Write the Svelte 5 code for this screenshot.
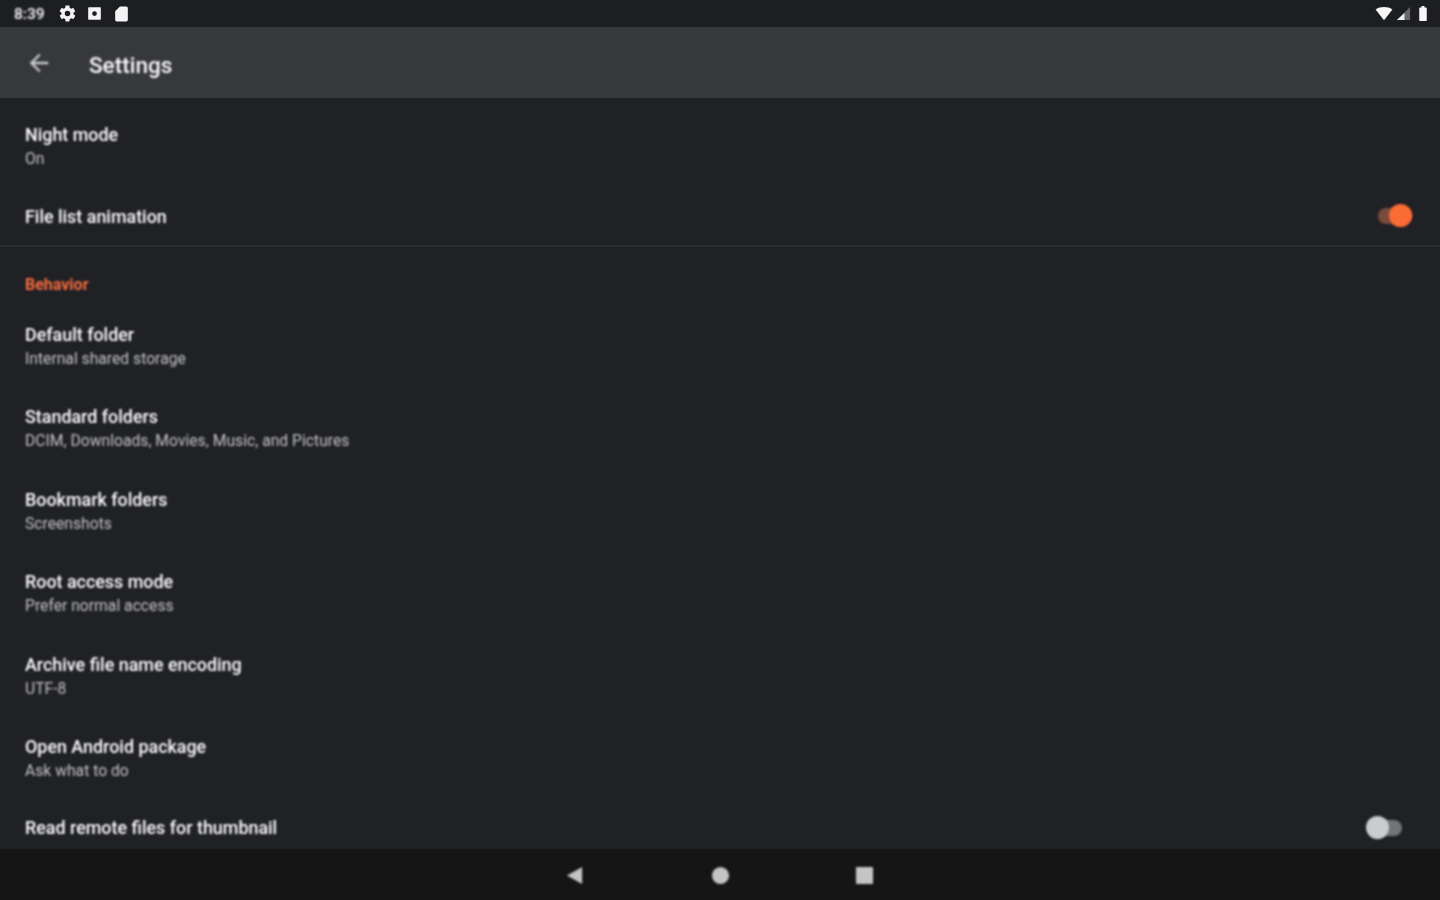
<script>
  const behavior = [
    { title: 'Default folder', summary: 'Internal shared storage' },
    { title: 'Standard folders', summary: 'DCIM, Downloads, Movies, Music, and Pictures' },
    { title: 'Bookmark folders', summary: 'Screenshots' },
    { title: 'Root access mode', summary: 'Prefer normal access' },
    { title: 'Archive file name encoding', summary: 'UTF-8' },
    { title: 'Open Android package', summary: 'Ask what to do' }
  ];
</script>

<div class="screen">
  <div class="status-bar">
    <div class="status-left">
      <span class="time">8:39</span>
      <svg class="st-icon" viewBox="0 0 24 24" aria-hidden="true">
        <path d="M19.4 13c.1-.3.1-.6.1-1s0-.7-.1-1l2.1-1.6c.2-.1.2-.4.1-.6l-2-3.5c-.1-.2-.4-.3-.6-.2l-2.5 1c-.5-.4-1.100-.7-1.700-1l-.4-2.600c0-.3-.2-.5-.5-.5h-4c-.3 0-.5.2-.5.4l-.4 2.700c-.6.2-1.200.6-1.700 1l-2.500-1c-.2-.1-.5 0-.6.2l-2 3.500c-.1.2-.1.5.1.6L4.500 11c0 .3-.1.6-.1 1s0 .7.1 1l-2.100 1.600c-.2.1-.2.4-.1.6l2 3.500c.1.2.4.3.6.2l2.500-1c.5.4 1.100.7 1.700 1l.4 2.600c0 .3.2.5.5.5h4c.3 0 .5-.2.5-.4l.4-2.700c.6-.2 1.200-.6 1.700-1l2.500 1c.2.1.5 0 .6-.2l2-3.500c.1-.2.1-.5-.1-.6zM12 15.500a3.500 3.500 0 1 1 0-7 3.500 3.500 0 0 1 0 7z" />
      </svg>
      <svg class="st-icon" viewBox="0 0 24 24" aria-hidden="true">
        <path fill-rule="evenodd" d="M5 4h14a1 1 0 0 1 1 1v14a1 1 0 0 1-1 1H5a1 1 0 0 1-1-1V5a1 1 0 0 1 1-1zm7 5a3 3 0 1 0 0 6 3 3 0 0 0 0-6z" />
      </svg>
      <svg class="st-icon" viewBox="0 0 24 24" aria-hidden="true">
        <path d="M10 3h8a2 2 0 0 1 2 2v15a2 2 0 0 1-2 2H6a2 2 0 0 1-2-2V9z" />
      </svg>
    </div>
    <div class="status-right">
      <svg class="wifi" viewBox="0 0 24 20" aria-hidden="true"><path d="M0 3.500C3.500 1 7.500 0 12 0s8.500 1 12 3.500L12 19z" /></svg>
      <svg class="signal" viewBox="0 0 16 16" aria-hidden="true">
        <path class="signal-dim" d="M15 1v14H1z" />
        <path d="M9 7.500V15H1z" />
      </svg>
      <svg class="battery" viewBox="0 0 12 20" aria-hidden="true"><path d="M4 0h4v2h2a1 1 0 0 1 1 1v16a1 1 0 0 1-1 1H2a1 1 0 0 1-1-1V3a1 1 0 0 1 1-1h2z" /></svg>
    </div>
  </div>

  <header class="app-bar">
    <svg class="back" viewBox="0 0 24 24" aria-label="Back">
      <path d="M20 11H7.800l5.600-5.600L12 4l-8 8 8 8 1.400-1.400L7.800 13H20z" />
    </svg>
    <h1>Settings</h1>
  </header>

  <main class="list">
    <div class="row">
      <div class="text">
        <div class="title">Night mode</div>
        <div class="summary">On</div>
      </div>
    </div>
    <div class="row single">
      <div class="title">File list animation</div>
      <span class="switch on"><span class="track"></span><span class="thumb"></span></span>
    </div>
    <div class="divider"></div>
    <div class="section">Behavior</div>
    {#each behavior as item}
      <div class="row">
        <div class="text">
          <div class="title">{item.title}</div>
          <div class="summary">{item.summary}</div>
        </div>
      </div>
    {/each}
    <div class="row last">
      <div class="title">Read remote files for thumbnail</div>
      <span class="switch off"><span class="track"></span><span class="thumb"></span></span>
    </div>
  </main>

  <nav class="nav-bar">
    <svg class="nav-icon" viewBox="0 0 20 20" aria-label="Back"><path d="M18 1v18L2 10z" /></svg>
    <svg class="nav-icon" viewBox="0 0 20 20" aria-label="Home"><circle cx="10" cy="10" r="9" /></svg>
    <svg class="nav-icon" viewBox="0 0 20 20" aria-label="Recents"><rect x="1" y="1" width="18" height="18" rx="1" /></svg>
  </nav>
</div>

<style>
  :global(body) {
    background: #202125;
  }

  .screen {
    height: 900px;
    display: flex;
    flex-direction: column;
    overflow: hidden;
    font-family: Roboto, 'Liberation Sans', sans-serif;
    background: #202125;
  }

  .status-bar {
    height: 27px;
    flex-shrink: 0;
    display: flex;
    align-items: center;
    justify-content: space-between;
    padding: 0 12px 0 14px;
    background: #1d1e21;
    color: #fff;
  }

  .status-left {
    display: flex;
    align-items: center;
    gap: 8px;
  }

  .time {
    font-size: 15.5px;
    font-weight: 500;
    width: 36px;
    margin-top: 1px;
    filter: blur(0.8px);
  }

  .st-icon {
    width: 19px;
    height: 19px;
    fill: #f4f4f4;
    filter: blur(0.5px);
  }

  .status-right {
    display: flex;
    align-items: center;
    gap: 3px;
    filter: blur(0.5px);
  }

  .wifi {
    width: 18px;
    height: 14px;
    fill: #f6f6f6;
  }

  .signal {
    width: 15px;
    height: 15px;
    fill: #f0f0f0;
  }

  .signal-dim {
    opacity: 0.35;
  }

  .battery {
    width: 10px;
    height: 15px;
    margin-left: 4px;
    fill: #f6f6f6;
  }

  .app-bar {
    height: 71px;
    flex-shrink: 0;
    display: flex;
    align-items: center;
    padding-left: 25px;
    background: #37383c;
  }

  .back {
    width: 28px;
    height: 28px;
    fill: #c8c9ca;
    filter: blur(0.8px);
  }

  h1 {
    margin: 4px 0 0 36px;
    font-size: 22.5px;
    font-weight: 500;
    color: #fafafa;
    filter: blur(0.8px);
  }

  .list {
    flex: 1;
    min-height: 0;
    overflow: hidden;
    padding-top: 7px;
  }

  .row {
    height: 82.5px;
    box-sizing: border-box;
    padding: 0 25px;
    display: flex;
    align-items: flex-start;
    justify-content: space-between;
  }

  .text {
    padding-top: 18px;
  }

  .row.single {
    height: 57.5px;
    align-items: center;
    padding-right: 28px;
  }

  .row.last {
    height: 56.5px;
    align-items: center;
    padding-right: 38px;
  }

  .title {
    font-size: 17.9px;
    font-weight: 500;
    line-height: 23px;
    color: #fff;
    filter: blur(0.8px);
  }

  .summary {
    font-size: 15.7px;
    line-height: 24px;
    margin-top: 1px;
    color: #c2c3c5;
    filter: blur(0.8px);
  }

  .divider {
    height: 2px;
    background: #2b2c30;
    filter: blur(0.5px);
  }

  .section {
    height: 57.5px;
    box-sizing: border-box;
    padding: 28px 25px 0;
    font-size: 16px;
    line-height: 20px;
    font-weight: 700;
    color: #f66c3e;
    filter: blur(0.8px);
  }

  .switch {
    position: relative;
    display: block;
    width: 36px;
    height: 24px;
    flex-shrink: 0;
  }

  .track {
    position: absolute;
    left: 2px;
    right: 0;
    top: 4px;
    height: 16px;
    border-radius: 8px;
    filter: blur(1px);
  }

  .thumb {
    position: absolute;
    top: 0;
    width: 23px;
    height: 23px;
    border-radius: 50%;
    filter: blur(0.8px);
  }

  .switch.on .track {
    background: #7a4b3a;
  }

  .switch.on .thumb {
    right: 0;
    background: #fb6c35;
  }

  .switch.off .track {
    background: #737476;
  }

  .switch.off .thumb {
    left: 0;
    background: #cbcccd;
  }

  .nav-bar {
    height: 51px;
    flex-shrink: 0;
    display: flex;
    align-items: center;
    justify-content: center;
    gap: 125px;
    background: #151516;
  }

  .nav-icon {
    width: 19px;
    height: 19px;
    fill: #c4c4c5;
    margin-top: 1px;
    filter: blur(0.8px);
  }

  .nav-icon:first-child {
    margin-left: -2px;
    margin-right: 2px;
  }
</style>
